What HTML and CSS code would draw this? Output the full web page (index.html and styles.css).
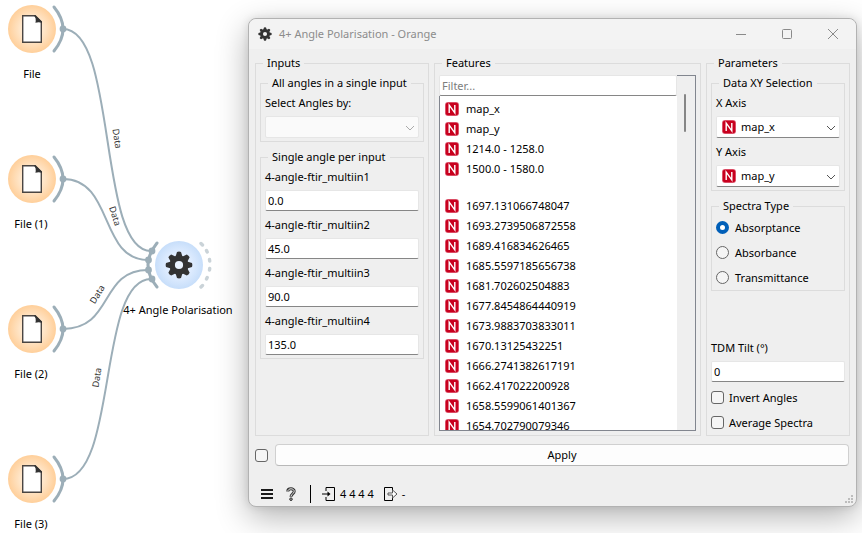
FILE: index.html
```html
<!DOCTYPE html>
<html lang="en">
<head>
<meta charset="utf-8">
<title>4+ Angle Polarisation - Orange</title>
<link rel="stylesheet" href="styles.css">
</head>
<body>
<svg class="canvas" width="248" height="533" aria-label="Workflow">
  <defs>
    <radialGradient id="orange"><stop offset="0" stop-color="#fff3e4"/><stop offset=".5" stop-color="#ffe6c9"/><stop offset="1" stop-color="#ffcf9a"/></radialGradient>
    <radialGradient id="blue"><stop offset="0" stop-color="#eef5ff"/><stop offset=".5" stop-color="#e0edff"/><stop offset="1" stop-color="#c7defa"/></radialGradient>
    <g id="file-node">
      <circle r="24" fill="url(#orange)"/>
      <path d="M-9.3 -13.3H2.500L9.300 -7V13.200H-9.300Z" fill="#fff" stroke="#4a4542" stroke-width="1.400"/>
      <path d="M2 -14Q4.500 -11 3.400 -6.200Q7 -7.600 10 -6V-7.400L3.500 -14Z" fill="#333"/>
      <path d="M22 -22Q40 0 22 22" fill="none" stroke="#9caeb8" stroke-width="3" stroke-linecap="round"/>
      <circle cx="31" r="3.400" fill="#9caeb8"/>
    </g>
    <g id="gear" fill="#333">
      <circle r="6.800" fill="none" stroke="#333" stroke-width="5.400"/>
      <g id="teeth"><path id="tooth" d="M-3.600 -8L-2 -13Q0 -13.800 2 -13L3.600 -8Z"/>
      <use href="#tooth" transform="rotate(45)"/><use href="#tooth" transform="rotate(90)"/><use href="#tooth" transform="rotate(135)"/></g>
      <use href="#teeth" transform="rotate(180)"/>
    </g>
    <g id="n-icon">
      <rect width="14" height="14" rx="3" fill="#e0667c"/>
      <rect x=".8" y=".8" width="12.400" height="12.400" rx="2" fill="#c8001e"/>
      <path d="M4.200 11V3.200L9.800 10.800V3" fill="none" stroke="#fff" stroke-width="1.400"/>
    </g>
    <path id="chevron" d="M1 1L5 5L9 1" fill="none" stroke="currentColor"/>
  </defs>
  <g fill="none" stroke="#9caeb8" stroke-width="2">
    <path d="M63 29C118 29 97 251 151 251"/>
    <path d="M63 179C114 179 99 260 148 260"/>
    <path d="M63 329C114 329 99 270 148 270"/>
    <path d="M63 479C118 479 97 279 151 279"/>
    <path d="M157 243Q139 265 157 287" stroke-width="3" stroke-linecap="round"/>
    <path d="M201 243.500l1.500 1.500M206.500 250.500l.7 1.500M209.500 259.500l.2 1.500M209.700 268.500l-.2 1.500M207.200 277.500l-.7 1.500M202.500 285.500l-1.500 1.500" stroke="#cad3d8" stroke-width="3.400" stroke-linecap="round"/>
  </g>
  <g fill="#9caeb8"><circle cx="152" cy="251" r="3.400"/><circle cx="148.500" cy="260" r="3.400"/><circle cx="148.500" cy="270" r="3.400"/><circle cx="152" cy="279" r="3.400"/></g>
  <use href="#file-node" x="32" y="29"/>
  <use href="#file-node" x="32" y="179"/>
  <use href="#file-node" x="32" y="329"/>
  <use href="#file-node" x="32" y="479"/>
  <circle cx="179" cy="265" r="24" fill="url(#blue)"/>
  <use href="#gear" x="179" y="265"/>
  <g text-anchor="middle">
    <text x="32" y="78">File</text>
    <text x="31" y="228">File (1)</text>
    <text x="31" y="378">File (2)</text>
    <text x="31" y="528">File (3)</text>
    <text x="178" y="314">4+ Angle Polarisation</text>
  </g>
  <g class="link-label" text-anchor="middle">
    <text transform="translate(114 139) rotate(82)">Data</text>
    <text transform="translate(112 217) rotate(72)">Data</text>
    <text transform="translate(100 296) rotate(-59)">Data</text>
    <text transform="translate(100 378) rotate(-82)">Data</text>
  </g>
</svg>

<main class="window">
  <header class="titlebar">
    <svg class="title-icon" width="14" height="14" viewBox="-14 -14 28 28"><use href="#gear"/></svg>
    <h1>4+ Angle Polarisation - Orange</h1>
    <button aria-label="Minimize"><svg width="12" height="12"><path d="M1 6.500H11"/></svg></button>
    <button aria-label="Maximize"><svg width="12" height="12"><rect x="1.500" y="1.500" width="9" height="9" rx="1"/></svg></button>
    <button aria-label="Close"><svg width="12" height="12"><path d="M1 1L11 11M11 1L1 11"/></svg></button>
  </header>

  <div class="panels">
    <fieldset class="group">
      <legend>Inputs</legend>
      <fieldset class="group inner">
        <legend>All angles in a single input</legend>
        <label for="by">Select Angles by:</label>
        <div class="combo disabled"><select id="by" disabled><option></option></select><svg class="arrow" width="10" height="6"><use href="#chevron"/></svg></div>
      </fieldset>
      <fieldset class="group inner">
        <legend>Single angle per input</legend>
        <label for="a1">4-angle-ftir_multiin1</label><input class="field" id="a1" value="0.0">
        <label for="a2">4-angle-ftir_multiin2</label><input class="field" id="a2" value="45.0">
        <label for="a3">4-angle-ftir_multiin3</label><input class="field" id="a3" value="90.0">
        <label for="a4">4-angle-ftir_multiin4</label><input class="field" id="a4" value="135.0">
      </fieldset>
    </fieldset>

    <fieldset class="group">
      <legend>Features</legend>
      <div class="features">
        <input class="field" aria-label="Filter" placeholder="Filter...">
        <ul class="list">
          <li><svg width="14" height="14"><use href="#n-icon"/></svg>map_x</li>
          <li><svg width="14" height="14"><use href="#n-icon"/></svg>map_y</li>
          <li><svg width="14" height="14"><use href="#n-icon"/></svg>1214.0 - 1258.0</li>
          <li><svg width="14" height="14"><use href="#n-icon"/></svg>1500.0 - 1580.0</li>
          <li class="separator"></li>
          <li><svg width="14" height="14"><use href="#n-icon"/></svg>1697.131066748047</li>
          <li><svg width="14" height="14"><use href="#n-icon"/></svg>1693.2739506872558</li>
          <li><svg width="14" height="14"><use href="#n-icon"/></svg>1689.416834626465</li>
          <li><svg width="14" height="14"><use href="#n-icon"/></svg>1685.5597185656738</li>
          <li><svg width="14" height="14"><use href="#n-icon"/></svg>1681.702602504883</li>
          <li><svg width="14" height="14"><use href="#n-icon"/></svg>1677.8454864440919</li>
          <li><svg width="14" height="14"><use href="#n-icon"/></svg>1673.9883703833011</li>
          <li><svg width="14" height="14"><use href="#n-icon"/></svg>1670.13125432251</li>
          <li><svg width="14" height="14"><use href="#n-icon"/></svg>1666.2741382617191</li>
          <li><svg width="14" height="14"><use href="#n-icon"/></svg>1662.417022200928</li>
          <li><svg width="14" height="14"><use href="#n-icon"/></svg>1658.5599061401367</li>
          <li><svg width="14" height="14"><use href="#n-icon"/></svg>1654.702790079346</li>
        </ul>
        <div class="scrollbar"><div class="thumb"></div></div>
      </div>
    </fieldset>

    <fieldset class="group parameters">
      <legend>Parameters</legend>
      <fieldset class="group inner">
        <legend>Data XY Selection</legend>
        <label for="x">X Axis</label>
        <div class="combo"><svg class="kind" width="14" height="14"><use href="#n-icon"/></svg><select id="x"><option>map_x</option></select><svg class="arrow" width="10" height="6"><use href="#chevron"/></svg></div>
        <label for="y">Y Axis</label>
        <div class="combo"><svg class="kind" width="14" height="14"><use href="#n-icon"/></svg><select id="y"><option>map_y</option></select><svg class="arrow" width="10" height="6"><use href="#chevron"/></svg></div>
      </fieldset>
      <fieldset class="group inner radios">
        <legend>Spectra Type</legend>
        <label class="choice"><input type="radio" name="type" checked>Absorptance</label>
        <label class="choice"><input type="radio" name="type">Absorbance</label>
        <label class="choice"><input type="radio" name="type">Transmittance</label>
      </fieldset>
      <div class="tilt">
        <label for="tdm">TDM Tilt (°)</label><input class="field" id="tdm" value="0">
        <label class="choice"><input type="checkbox">Invert Angles</label>
        <label class="choice"><input type="checkbox">Average Spectra</label>
      </div>
    </fieldset>
  </div>

  <div class="apply-row">
    <input type="checkbox" aria-label="Apply automatically">
    <button class="apply">Apply</button>
  </div>

  <footer class="status">
    <button aria-label="Menu"><svg width="12" height="12"><path d="M0 2H12M0 6H12M0 10H12" stroke="#1a1a1a" stroke-width="2"/></svg></button>
    <button class="help" aria-label="Help"><svg width="10" height="14" fill="none"><path d="M1.800 4.500C1.800 1 8.200 1 8.200 4.300C8.200 7 5 6.800 5 9.800" stroke="#333" stroke-width="3"/><path d="M1.800 4.300C2 1 8.200 1 8.200 4.300C8.200 7 5 6.800 5 9.300" stroke="#eee" stroke-width="1"/><circle cx="5" cy="12.200" r="1.300" stroke="#333" fill="#999"/></svg></button>
    <span class="divider"></span>
    <svg width="13" height="14" fill="none" stroke="#000"><path d="M4 4V.500H12.500V13.500H4V10M0 7H7" /><path d="M5.500 4.500L8.500 7L5.500 9.500Z" fill="#000" stroke="none"/></svg>
    <span class="counts">4 4 4 4</span>
    <svg width="14" height="14" fill="none" stroke="#000"><path d="M8.500 3V.500H.500V13.500H8.500V11"/><path d="M4 6H8.500V3L13 7L8.500 11V8H4Z" stroke="#555" fill="#fff"/></svg>
    <span>-</span>
    <svg class="grip" width="8" height="8" fill="#bdbdbd"><path d="M6 0h2v2H6zM3 3h2v2H3zM6 3h2v2H6zM0 6h2v2H0zM3 6h2v2H3zM6 6h2v2H6z"/></svg>
  </footer>
</main>
</body>
</html>
```
FILE: styles.css
```css
* { box-sizing: border-box; }

body {
  margin: 0;
  min-height: 100vh;
  position: relative;
  overflow: hidden;
  background: #fff;
  color: #000;
  font: 11px/16px "Noto Sans", "Open Sans", sans-serif;
}

input, select, button { font: inherit; color: inherit; margin: 0; }
button { padding: 0; border: 0; background: none; }
svg { flex: none; }

.canvas { display: block; }
.link-label { font-size: 9px; fill: #333; }

.window {
  position: absolute;
  inset: 18px 5px 26px 248px;
  display: flex;
  flex-direction: column;
  border: 1px solid #b2b2b2;
  border-radius: 8px;
  background: #efefef;
  box-shadow: 0 10px 32px rgba(0, 0, 0, .3), 0 0 8px rgba(0, 0, 0, .1);
}

.titlebar {
  display: flex;
  align-items: center;
  height: 30px;
  padding-left: 9px;
  border-radius: 8px 8px 0 0;
  background: #f3f3f3;
}
.titlebar h1 {
  flex: 1;
  margin: 0 0 0 7px;
  font-size: 11px;
  font-weight: 400;
  color: #8c8c8c;
}
.titlebar button { width: 46px; height: 30px; }
.titlebar button svg { display: block; margin: 0 auto; fill: none; stroke: #8a8a8a; }

.panels {
  flex: 1;
  min-height: 0;
  display: grid;
  grid-template-columns: 174px 1fr 144px;
  gap: 5px;
  padding: 6px 6px 0;
}

.group {
  display: flex;
  flex-direction: column;
  gap: 7px;
  min-width: 0;
  min-height: 0;
  margin: 0;
  padding: 4px;
  border: 1px solid #dcdcdc;
}
.group legend { margin-left: 3px; padding: 0 4px; }
.inner { gap: 5px; padding: 4px 4px 3px; }
.inner > .field + label, .inner > .combo + label { margin-top: 1px; }
.inner label { white-space: nowrap; }

.field {
  width: 100%;
  height: 21px;
  padding: 0 2px;
  border: 1px solid #e6e6e6;
  border-bottom-color: #868686;
  border-radius: 2px;
  background: #fff;
  outline: 0;
}
.field::placeholder { color: #7d7d7d; }

.combo { position: relative; height: 22px; color: #555; }
.combo select {
  display: block;
  width: 100%;
  height: 22px;
  padding: 0 20px 0 24px;
  appearance: none;
  border: 1px solid #e6e6e6;
  border-bottom-color: #868686;
  border-radius: 2px;
  background: #fff;
  color: #000;
}
.combo.disabled { color: #aaa; }
.combo.disabled select { border-color: #e6e6e6; background: #fafafa; opacity: 1; }
.combo svg { position: absolute; pointer-events: none; }
.kind { left: 6px; top: 4px; }
.arrow { right: 4px; top: 9px; }

.features {
  flex: 1;
  min-height: 0;
  display: grid;
  grid-template: 21px minmax(0, 1fr) / 1fr 19px;
}
.list {
  margin: 0;
  padding: 3px 0 0 5px;
  overflow: hidden;
  list-style: none;
  border-left: 1px solid #82868f;
  border-bottom: 1px solid #82868f;
  background: #fff;
}
.list li { display: flex; align-items: center; gap: 7px; height: 20px; }
.list .separator { height: 17px; }
.scrollbar {
  grid-area: 1 / 2 / 3 / 3;
  padding: 18px 8px 0 7px;
  border: 1px solid #82868f;
  border-left: 0;
}
.thumb { width: 2px; height: 38px; border-radius: 1px; background: #868686; }

.parameters { padding-bottom: 0; }
.radios { gap: 0; padding: 1px 4px 0; }
.choice { display: flex; align-items: center; gap: 6px; height: 25px; }
.tilt { display: flex; flex-direction: column; margin-top: auto; }
.tilt .field { margin: 5px 0 3px; }
.tilt .choice { gap: 5px; }

input[type="radio"], input[type="checkbox"] {
  appearance: none;
  flex: none;
  width: 13px;
  height: 13px;
  border: 1px solid #666;
  border-radius: 3px;
  background: #f5f5f5;
}
input[type="radio"] { border-radius: 50%; }
input[type="radio"]:checked { border: 4px solid #005fb8; background: #fff; }

.apply-row {
  display: flex;
  align-items: center;
  gap: 7px;
  padding: 8px 7px 0 6px;
}
.apply {
  flex: 1;
  height: 22px;
  border: 1px solid #d0d0d0;
  border-bottom-color: #b8b8b8;
  border-radius: 4px;
  background: #fdfdfd;
}

.status {
  position: relative;
  display: flex;
  align-items: center;
  height: 24px;
  margin-top: 16px;
  padding-left: 12px;
}
.status button svg { display: block; }
.help { margin: 0 14px 0 13px; }
.divider { width: 1px; height: 18px; margin-right: 11px; background: #000; }
.counts { margin: 0 10px 0 5px; }
.counts + svg { margin-right: 4px; }
.grip { position: absolute; right: 3px; bottom: 3px; }
```
